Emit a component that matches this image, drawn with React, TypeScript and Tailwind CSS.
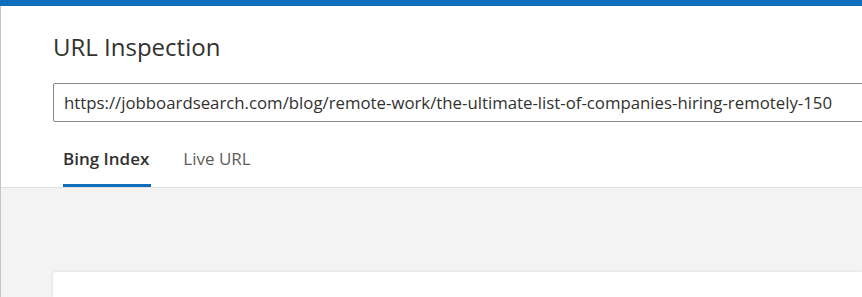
import React from 'react';

const url =
  'https://jobboardsearch.com/blog/remote-work/the-ultimate-list-of-companies-hiring-remotely-150';

function Tab({ label, active }: { label: string; active?: boolean }) {
  return (
    <div className="relative flex h-[51px] items-start pt-[10px]">
      <span
        className={
          active
            ? 'text-[17px] font-semibold text-[#323130]'
            : 'text-[17px] text-[#605e5c]'
        }
      >
        {label}
      </span>
      {active && (
        <div className="absolute left-0 right-[-2px] bottom-0 h-[3px] bg-[#106ebe]" />
      )}
    </div>
  );
}

export default function App() {
  return (
    <div
      className="flex h-[297px] w-full flex-col overflow-hidden bg-white"
      style={{ fontFamily: '"Open Sans", "Noto Sans", sans-serif' }}
    >
      <div className="h-[6px] shrink-0 bg-[#106ebe]" />
      <div className="flex flex-1 flex-col overflow-hidden border-l border-[#c8c6c4]">
        <div className="flex flex-col pl-[52px]">
          <h1 className="mt-[25px] text-[24px] leading-[32px] text-[#323130]">
            URL Inspection
          </h1>
          <div className="mt-[20px] flex h-[39px] w-[900px] shrink-0 items-center rounded-[2px] border border-[#8a8886] px-[10px]">
            <span className="whitespace-nowrap text-[16.8px] text-[#323130]">{url}</span>
          </div>
          <div className="mt-[14px] flex gap-[34px] pl-[10px]">
            <Tab label="Bing Index" active />
            <Tab label="Live URL" />
          </div>
        </div>
        <div className="flex flex-1 flex-col border-t border-[#e1dfdd] bg-[#f3f3f3] pl-[52px] pt-[84px]">
          <div className="flex-1 rounded-tl-[3px] bg-white shadow-[0_0_3px_rgba(0,0,0,0.12)]" />
        </div>
      </div>
    </div>
  );
}
